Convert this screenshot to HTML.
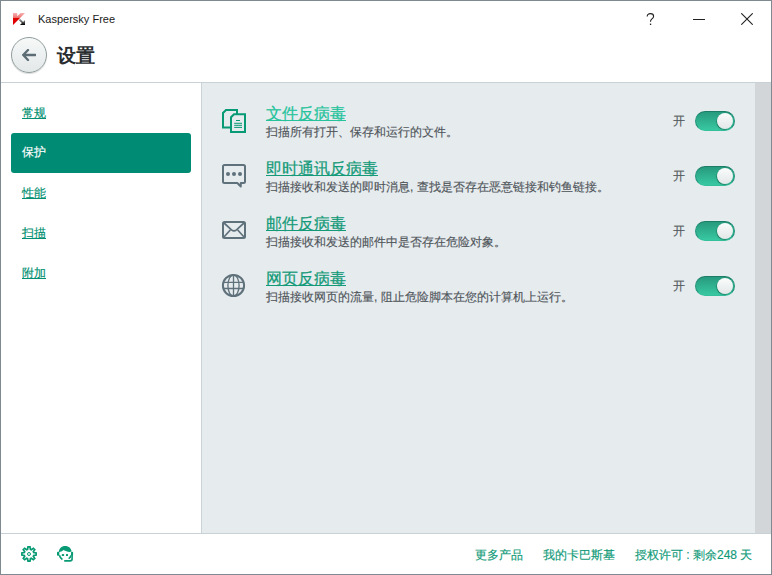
<!DOCTYPE html>
<html><head><meta charset="utf-8">
<style>
*{box-sizing:border-box;margin:0;padding:0}
html,body{width:772px;height:575px;overflow:hidden;background:#fff}
body{font-family:"Liberation Sans",sans-serif;position:relative;color:#333}
.abs{position:absolute}
#frame{left:0;top:0;width:772px;height:575px;border:1px solid #7e8a8d;z-index:10;pointer-events:none}
#hdrline{left:0;top:82px;width:772px;height:1px;background:#c7d1d6}
#side{left:1px;top:83px;width:200px;height:450px;background:#fff}
#sideline{left:201px;top:83px;width:1px;height:450px;background:#c9d3d8}
#content{left:202px;top:83px;width:553px;height:450px;background:#e6ebee}
#scroll{left:755px;top:83px;width:16px;height:450px;background:#d2d6d9}
#ftline{left:0;top:533px;width:772px;height:1px;background:#c7d1d6}
.t{white-space:nowrap;line-height:1;-webkit-text-stroke:0.15px currentColor}
.nav{left:22px;font-size:12px;color:#008f70;text-decoration:underline}
#sel{left:11px;top:133px;width:180px;height:40px;background:#008c74;border-radius:3px}
.ttl{left:266px;font-size:16px;color:#139a78;text-decoration:underline;-webkit-text-stroke:0.22px currentColor}
.desc{left:266px;font-size:12px;color:#50565b}
.on{left:673px;font-size:12px;color:#555b60}
.tg{left:695px;width:40px;height:20px;border-radius:10px;background:linear-gradient(#279a7d,#38c8a2);border:1px solid;border-color:#1c7d66 #22937a #35c09c #22937a}
.tg i{position:absolute;left:21px;top:1px;width:16px;height:16px;border-radius:50%;background:linear-gradient(#fbfcfc,#e2e7e7);box-shadow:-0.5px 0.8px 1px rgba(0,40,30,.55)}
.ft{font-size:12px;color:#109a78}
</style></head><body>
<div id="frame" class="abs"></div>

<!-- title bar -->
<svg class="abs" style="left:13px;top:13px" width="12" height="12" viewBox="0 0 12 12">
<defs><linearGradient id="rg" x1="0" y1="0" x2="0" y2="1"><stop offset="0" stop-color="#f7b3b3"/><stop offset="0.42" stop-color="#ee6a6a"/><stop offset="0.45" stop-color="#e00000"/><stop offset="1" stop-color="#e00000"/></linearGradient>
<linearGradient id="gg" x1="0" y1="0" x2="0" y2="1"><stop offset="0" stop-color="#aaa"/><stop offset="1" stop-color="#000"/></linearGradient></defs>
<polygon points="0,0 4.2,0 4.2,3.2 7.5,0 12,0 0,12" fill="url(#rg)"/>
<polygon points="5.8,7.2 7.2,5.8 10.1,8.9 12,7 12,12 7,12 8.9,10.1" fill="url(#gg)"/>
</svg>
<div class="abs t" style="left:38px;top:14px;font-size:11px;color:#1a1a1a;-webkit-text-stroke:0">Kaspersky Free</div>
<svg class="abs" style="left:646px;top:13px" width="9" height="13" viewBox="0 0 9 13"><path d="M1.2 3.4C1.2 1.6 2.4 0.6 4.4 0.6C6.4 0.6 7.6 1.8 7.6 3.3C7.6 4.7 6.8 5.3 5.7 6.1C4.8 6.8 4.5 7.4 4.5 8.8" fill="none" stroke="#222" stroke-width="1.1"/><rect x="3.9" y="10.6" width="1.3" height="1.4" fill="#222"/></svg>
<div class="abs" style="left:693px;top:19px;width:12px;height:1px;background:#222"></div>
<svg class="abs" style="left:741px;top:13px" width="12" height="12" viewBox="0 0 12 12"><path d="M0.3 0.3L11.7 11.7M11.7 0.3L0.3 11.7" stroke="#222" stroke-width="1.1"/></svg>

<!-- header -->
<div class="abs" style="left:11px;top:37px;width:36px;height:36px;border-radius:50%;border:1px solid #909c9c;background:linear-gradient(#f7f9f9,#e3e8e8);box-shadow:0 1px 1px rgba(0,0,0,.15)"></div>
<svg class="abs" style="left:22px;top:49px" width="14" height="12" viewBox="0 0 14 12"><path d="M6 1L1.2 6L6 11M1.2 6H13.5" fill="none" stroke="#5d6d75" stroke-width="2.3" stroke-linecap="round" stroke-linejoin="round"/></svg>
<div class="abs t" style="left:57px;top:46px;font-size:19px;font-weight:bold;color:#2a2d2f;-webkit-text-stroke:0">设置</div>
<div id="hdrline" class="abs"></div>

<!-- sidebar -->
<div id="side" class="abs"></div>
<div id="sideline" class="abs"></div>
<div id="sel" class="abs"></div>
<div class="abs t nav" style="top:107px">常规</div>
<div class="abs t nav" style="top:146px;color:#fff;text-decoration:none">保护</div>
<div class="abs t nav" style="top:187px">性能</div>
<div class="abs t nav" style="top:227px">扫描</div>
<div class="abs t nav" style="top:267px">附加</div>

<!-- content -->
<div id="content" class="abs"></div>
<div id="scroll" class="abs"></div>

<div class="abs t ttl" style="top:106px;color:#25c39c">文件反病毒</div>
<div class="abs t desc" style="top:126px">扫描所有打开、保存和运行的文件。</div>
<div class="abs t ttl" style="top:161px">即时通讯反病毒</div>
<div class="abs t desc" style="top:181px">扫描接收和发送的即时消息, 查找是否存在恶意链接和钓鱼链接。</div>
<div class="abs t ttl" style="top:216px">邮件反病毒</div>
<div class="abs t desc" style="top:236px">扫描接收和发送的邮件中是否存在危险对象。</div>
<div class="abs t ttl" style="top:271px">网页反病毒</div>
<div class="abs t desc" style="top:291px">扫描接收网页的流量, 阻止危险脚本在您的计算机上运行。</div>

<div class="abs t on" style="top:115px">开</div>
<div class="abs tg" style="top:111px"><i></i></div>
<div class="abs t on" style="top:170px">开</div>
<div class="abs tg" style="top:166px"><i></i></div>
<div class="abs t on" style="top:225px">开</div>
<div class="abs tg" style="top:221px"><i></i></div>
<div class="abs t on" style="top:280px">开</div>
<div class="abs tg" style="top:276px"><i></i></div>

<!-- icons -->
<svg class="abs" style="left:221px;top:108px" width="27" height="27" viewBox="0 0 27 27">
<g fill="none" stroke="#079a74" stroke-width="2" stroke-linejoin="miter">
<path d="M9 19.6H2V5L5 2H16V6.2"/>
<path d="M10 24V9.2L13 6.2H24V24Z"/>
</g>
<path d="M15 12.5H19M13.2 15.3H21M13.2 17.3H21M13.2 19.4H21" stroke="#079a74" stroke-width="1"/>
</svg>
<svg class="abs" style="left:221px;top:163px" width="27" height="27" viewBox="0 0 27 27">
<path d="M3.5 2H22.5A1.5 1.5 0 0 1 24 3.5V18.5A1.5 1.5 0 0 1 22.5 20H19.8V23.5L16.3 20H3.5A1.5 1.5 0 0 1 2 18.5V3.5A1.5 1.5 0 0 1 3.5 2Z" fill="none" stroke="#5f717b" stroke-width="2" stroke-linejoin="round"/>
<circle cx="7" cy="11" r="2" fill="#5f717b"/><circle cx="13" cy="11" r="2" fill="#5f717b"/><circle cx="19" cy="11" r="2" fill="#5f717b"/>
</svg>
<svg class="abs" style="left:221px;top:220px" width="27" height="20" viewBox="0 0 27 20">
<rect x="2" y="2" width="22" height="16" rx="1.5" fill="none" stroke="#5f717b" stroke-width="2"/>
<path d="M2.5 2.5L10.5 9.8Q13 11.8 15.5 9.8L23.5 2.5M2.5 17.5L9.3 10M23.5 17.5L16.7 10" fill="none" stroke="#5f717b" stroke-width="1.7"/>
</svg>
<svg class="abs" style="left:221px;top:273px" width="25" height="25" viewBox="0 0 25 25">
<g fill="none" stroke="#5f717b">
<circle cx="12.5" cy="12.5" r="10.6" stroke-width="2"/>
<ellipse cx="12.5" cy="12.5" rx="5.6" ry="10.6" stroke-width="1.3"/>
<path d="M12.5 2V23M2 9.3H23M2 15.5H23" stroke-width="1.3"/>
</g>
</svg>

<!-- footer -->
<div id="ftline" class="abs"></div>
<svg class="abs" style="left:18px;top:543px" width="22" height="22" viewBox="0 0 22 22">
<path d="M9.57 6.31 L10.00 3.87 L12.00 3.87 L12.43 6.31 L13.30 6.67 L15.33 5.25 L16.75 6.67 L15.33 8.70 L15.69 9.57 L18.13 10.00 L18.13 12.00 L15.69 12.43 L15.33 13.30 L16.75 15.33 L15.33 16.75 L13.30 15.33 L12.43 15.69 L12.00 18.13 L10.00 18.13 L9.57 15.69 L8.70 15.33 L6.67 16.75 L5.25 15.33 L6.67 13.30 L6.31 12.43 L3.87 12.00 L3.87 10.00 L6.31 9.57 L6.67 8.70 L5.25 6.67 L6.67 5.25 L8.70 6.67Z" fill="none" stroke="#079a74" stroke-width="1.7" stroke-linejoin="miter"/>
<circle cx="11" cy="11" r="1.5" fill="none" stroke="#079a74" stroke-width="1"/>
</svg>
<svg class="abs" style="left:54px;top:543px" width="22" height="22" viewBox="0 0 22 22">
<path d="M4.8 9.2C4.9 5.5 7.5 2.9 11.2 2.9C14.8 2.9 17.4 5.3 17.6 8.6C15.2 9.4 12.2 8.7 9.6 7.1C8.3 8.3 6.7 9 4.8 9.2Z" fill="#079a74"/>
<rect x="3" y="8.8" width="2.3" height="3.9" rx="0.8" fill="#079a74"/>
<rect x="17" y="8.8" width="2.1" height="4" rx="0.8" fill="#079a74"/>
<path d="M5.4 12.3C5.9 14.3 7 15.6 8.4 16.5M16.9 12.3C16.6 13.8 15.7 15 14.6 15.7" fill="none" stroke="#079a74" stroke-width="1.6"/>
<path d="M18.1 12V16C18.1 17.3 17.3 17.9 16 17.9H10.2" fill="none" stroke="#079a74" stroke-width="1.6"/>
<rect x="7.8" y="11.1" width="2.3" height="1.9" fill="#079a74"/><rect x="12" y="11.1" width="2" height="1.9" fill="#079a74"/>
</svg>
<div class="abs t ft" style="left:475px;top:549px">更多产品</div>
<div class="abs t ft" style="left:543px;top:549px">我的卡巴斯基</div>
<div class="abs t ft" style="left:635px;top:549px">授权许可 : 剩余248 天</div>
</body></html>
